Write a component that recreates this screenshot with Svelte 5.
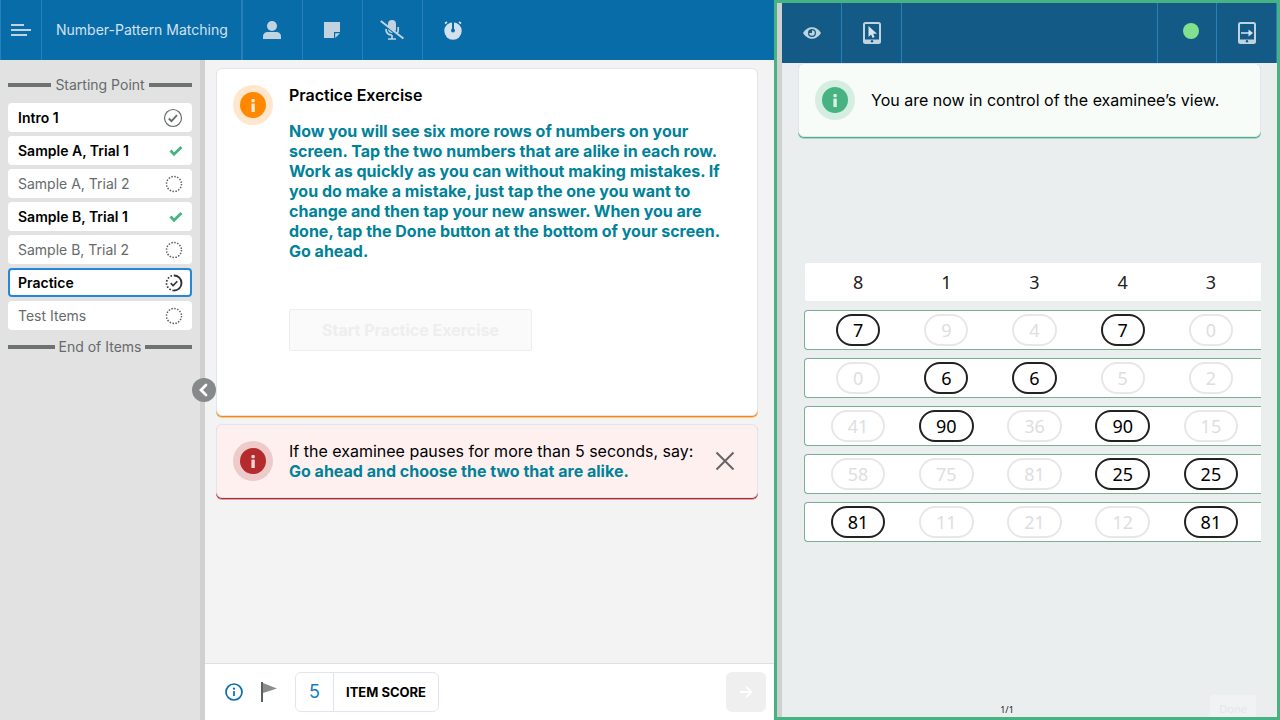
<script>
  const items = [
    { name: 'Intro 1', state: 'seen' },
    { name: 'Sample A, Trial 1', state: 'done' },
    { name: 'Sample A, Trial 2', state: 'open' },
    { name: 'Sample B, Trial 1', state: 'done' },
    { name: 'Sample B, Trial 2', state: 'open' },
    { name: 'Practice', state: 'current' },
    { name: 'Test Items', state: 'open' }
  ];
  const example = [8, 1, 3, 4, 3];
  let rows = $state([
    { values: [7, 9, 4, 7, 0], picked: [0, 3] },
    { values: [0, 6, 6, 5, 2], picked: [1, 2] },
    { values: [41, 90, 36, 90, 15], picked: [1, 3] },
    { values: [58, 75, 81, 25, 25], picked: [3, 4] },
    { values: [81, 11, 21, 12, 81], picked: [0, 4] }
  ]);
  let reminder = $state(true);

  function toggle(row, i) {
    row.picked = row.picked.includes(i) ? row.picked.filter((p) => p !== i) : [...row.picked, i];
  }
</script>

{#snippet badge(tone)}
  <span class="badge {tone}">
    <svg width="26" height="26" viewBox="0 0 26 26" aria-hidden="true">
      <circle cx="13" cy="13" r="13" />
      <rect class="mark" x="11.4" y="7" width="3.4" height="3.2" rx="1" />
      <path class="mark" d="M11.4 11.6h3.4V20h-3.4z" />
    </svg>
  </span>
{/snippet}

<div class="app">
  <section class="examiner">
    <header class="bar">
      <button class="menu" aria-label="Menu">
        <svg width="20" height="12" viewBox="0 0 20 12"><path d="M0 1h13M0 6h20M0 11h16" stroke="currentColor" stroke-width="2" /></svg>
      </button>
      <h1>Number-Pattern Matching</h1>
      <button class="tool" aria-label="Examinee">
        <svg width="18" height="18" viewBox="0 0 18 18" fill="currentColor"><circle cx="9" cy="5" r="5" /><path d="M0 18v-2.500C0 12.500 2 11 4.500 11h9c2.500 0 4.500 1.500 4.500 4.500V18z" /></svg>
      </button>
      <button class="tool" aria-label="Notes">
        <svg width="16" height="16" viewBox="0 0 16 16" fill="currentColor"><path d="M0 0h16v10h-6v6H0z" /><path d="M11.200 11.200H16L11.200 16z" /></svg>
      </button>
      <button class="tool" aria-label="Microphone off">
        <svg width="24" height="20" viewBox="0 0 24 20"><path d="M8 4a4 4 0 0 1 8 0v5a4 4 0 0 1-1 2.700L8 6.500zM8 9l5 4c-3 .3-5-1.500-5-4z" fill="currentColor" /><path d="M6 9c0 4 2.500 6 6 6M18.200 7v3c0 1.300-.4 2.400-1 3.200M12 15v4M8 19h8" fill="none" stroke="currentColor" stroke-width="1.700" /><path d="M.8 1l22.600 17.500" stroke="currentColor" stroke-width="2" /></svg>
      </button>
      <button class="tool last" aria-label="Timer">
        <svg width="18" height="20" viewBox="0 0 18 20"><circle cx="9" cy="11" r="8.700" fill="#d3e1ed" /><path d="M1 3.500l2-1.500M17 3.500l-2-1.500" stroke="#d3e1ed" stroke-width="1.600" /><path d="M9 1v9" stroke="#086ca9" stroke-width="2" /><circle cx="9" cy="10.500" r="2" fill="#086ca9" /></svg>
      </button>
    </header>

    <div class="body">
      <nav>
        <div class="marker">Starting Point</div>
        <ul>
          {#each items as item}
            <li>
              <button class="item {item.state}">
                <span>{item.name}</span>
                {#if item.state === 'seen'}
                  <svg width="20" height="20" viewBox="0 0 20 20" fill="none" stroke="#666b6b"><circle cx="10" cy="10" r="8.500" stroke-width="1.200" /><path d="M5.800 10.500l2.700 2.700 5.500-6" stroke-width="1.800" /></svg>
                {:else if item.state === 'done'}
                  <svg width="14" height="12" viewBox="0 0 14 12" fill="none" stroke="#47b382" stroke-width="2.800"><path d="M1.500 5.500l3.500 3.700L12.500 2" /></svg>
                {:else if item.state === 'open'}
                  <svg width="18" height="18" viewBox="0 0 18 18"><circle cx="9" cy="9" r="7.500" fill="none" stroke="#5c6060" stroke-width="1.500" stroke-dasharray="1.500 1.445" /></svg>
                {:else}
                  <svg width="18" height="18" viewBox="0 0 18 18" fill="none" stroke="#333"><path d="M9 1.500a7.500 7.500 0 0 1 0 15" stroke-width="1.900" /><path d="M9 16.500a7.500 7.500 0 0 1 0-15" stroke-width="1.700" stroke-dasharray="1.600 1.700" /><path d="M5.700 9.200l2.400 2.300 4.200-4.300" stroke-width="1.600" /></svg>
                {/if}
              </button>
            </li>
          {/each}
        </ul>
        <div class="marker">End of Items</div>
      </nav>
      <div class="divider">
        <button class="collapse" aria-label="Collapse item list">
          <svg width="10" height="14" viewBox="0 0 10 14"><path d="M7 2L2 7l5 5" fill="none" stroke="#fff" stroke-width="2.800" stroke-linecap="round" /></svg>
        </button>
      </div>

      <main>
        <div class="content">
          <article class="card orange exercise">
            {@render badge('orange')}
            <div class="text">
              <h2>Practice Exercise</h2>
              <p class="say">Now you will see six more rows of numbers on your screen. Tap the two numbers that are alike in each row. Work as quickly as you can without making mistakes. If you do make a mistake, just tap the one you want to change and then tap your new answer. When you are done, tap the Done button at the bottom of your screen. Go ahead.</p>
              <button class="start" disabled>Start Practice Exercise</button>
            </div>
          </article>
          {#if reminder}
            <article class="card red reminder">
              {@render badge('red')}
              <div class="text">
                <p>If the examinee pauses for more than 5 seconds, say:</p>
                <p class="say">Go ahead and choose the two that are alike.</p>
              </div>
              <button class="close" aria-label="Close" onclick={() => (reminder = false)}>
                <svg width="20" height="20" viewBox="0 0 20 20"><path d="M1.500 1.500l17 17M18.500 1.500l-17 17" stroke="#626666" stroke-width="2" /></svg>
              </button>
            </article>
          {/if}
        </div>
        <footer>
          <button class="plain" aria-label="Item information">
            <svg width="18" height="18" viewBox="0 0 18 18"><circle cx="9" cy="9" r="8" fill="none" stroke="#0b6dab" stroke-width="1.700" /><path d="M9 8v5" stroke="#0b6dab" stroke-width="1.700" /><circle cx="9" cy="5.700" r="1.100" fill="#0b6dab" /></svg>
          </button>
          <button class="plain" aria-label="Flag item">
            <svg width="16" height="20" viewBox="0 0 16 20"><path d="M2 1l14 5.500L2 11z" fill="#8a8d8d" /><path d="M1 0v20" stroke="#5c6060" stroke-width="2" /></svg>
          </button>
          <div class="score"><output>5</output><strong>ITEM SCORE</strong></div>
          <button class="next" aria-label="Next" disabled>
            <svg width="14" height="14" viewBox="0 0 14 14"><path d="M1 7h11M7 1.500L12.300 7 7 12.500" fill="none" stroke="#fff" stroke-width="1.800" /></svg>
          </button>
        </footer>
      </main>
    </div>
  </section>

  <section class="mirror">
    <div class="divider"></div>
    <div class="screen">
      <header class="bar dark">
        <button class="tool" aria-label="View">
          <svg width="18" height="12" viewBox="0 0 18 12"><path d="M0 6C4.500-1.700 13.500-1.700 18 6c-4.500 7.700-13.500 7.700-18 0z" fill="#c2d3e0" /><circle cx="9" cy="6" r="4" fill="#135b86" /><path d="M9 3.200A2.800 2.800 0 1 1 6.200 6H9z" fill="#c2d3e0" /></svg>
        </button>
        <button class="tool" aria-label="Control screen">
          <svg width="18" height="22" viewBox="0 0 18 22"><path d="M2.500 1h13A1.500 1.500 0 0 1 17 2.500v17a1.500 1.500 0 0 1-1.500 1.500h-13A1.500 1.500 0 0 1 1 19.500v-17A1.500 1.500 0 0 1 2.500 1z" fill="none" stroke="#c2d3e0" stroke-width="2" /><path d="M1 17.500h16V20H1z" fill="#c2d3e0" /><circle cx="9" cy="19.300" r="1.200" fill="#135b86" /><path d="M5.500 4v11l2.600-2.400 1.500 3.400 2-1-1.500-3.200H14z" fill="#d9e5ee" /></svg>
        </button>
        <span class="fill"></span>
        <button class="tool status" aria-label="Connected"><span class="dot"></span></button>
        <button class="tool send" aria-label="Send to examinee">
          <svg width="18" height="22" viewBox="0 0 18 22"><path d="M2.500 1h13A1.500 1.500 0 0 1 17 2.500v17a1.500 1.500 0 0 1-1.500 1.500h-13A1.500 1.500 0 0 1 1 19.500v-17A1.500 1.500 0 0 1 2.500 1z" fill="none" stroke="#c2d3e0" stroke-width="2" /><path d="M1 17.500h16V20H1z" fill="#c2d3e0" /><circle cx="9" cy="19.300" r="1.200" fill="#135b86" /><path d="M3 11h9" stroke="#d9e5ee" stroke-width="1.500" /><path d="M10.500 7.500L15 11l-4.500 3.500z" fill="#d9e5ee" /></svg>
        </button>
      </header>
      <div class="card green notice">
        {@render badge('green')}
        <p>You are now in control of the examinee’s view.</p>
      </div>
      <div class="grid">
        <div class="row example">
          {#each example as value}<span>{value}</span>{/each}
        </div>
        {#each rows as row}
          <div class="row">
            {#each row.values as value, i}
              <button class="pill" class:picked={row.picked.includes(i)} aria-pressed={row.picked.includes(i)} onclick={() => toggle(row, i)}>{value}</button>
            {/each}
          </div>
        {/each}
      </div>
      <div class="pager">
        <span class="count">1/1</span>
        <button class="finish" disabled>Done</button>
      </div>
    </div>
  </section>
</div>

<style>
  :global(body) { margin: 0; }
  * { box-sizing: border-box; }
  button { font: inherit; color: inherit; border: 0; padding: 0; background: none; }
  svg { display: block; flex: none; }
  h1, h2, p, ul { margin: 0; padding: 0; }

  .app { display: grid; grid-template-columns: 774fr 506fr; height: 100vh; overflow: hidden; font-family: Inter, 'Liberation Sans', sans-serif; font-size: 16px; line-height: 20px; color: #000; }
  .examiner { display: flex; flex-direction: column; min-width: 0; min-height: 0; }
  .bar { display: flex; flex: none; height: 60px; background: #086ca9; color: #c2d3e0; }
  .bar button { display: grid; place-items: center; }
  .menu { width: 42px; border-left: 1px solid #2980b9; border-right: 1px solid #2980b9; }
  h1 { display: flex; align-items: center; padding: 0 13px 0 14px; font-size: 14px; font-weight: 400; color: #d3e1ed; white-space: nowrap; border-right: 2px solid #2980b9; }
  .tool { width: 60px; border-right: 1px solid #2980b9; }
  .tool.last { border-right: 0; }

  .body { display: flex; flex: 1; min-height: 0; }
  nav { width: 200px; flex: none; padding: 15px 8px; background: #e2e2e2; }
  .marker { display: flex; align-items: center; gap: 4px; font-size: 14px; color: #666b6b; white-space: nowrap; }
  .marker::before, .marker::after { content: ''; flex: 1; height: 4px; background: #6d7272; }
  ul { display: flex; flex-direction: column; gap: 4px; margin: 8px 0 7px; list-style: none; }
  li { display: flex; }
  .item { display: flex; flex: 1; align-items: center; justify-content: space-between; height: 29px; padding: 0 7px 0 8px; border: 2px solid #fff; border-radius: 4px; background: #fff; font-size: 14px; font-weight: 600; }
  .item.open { font-weight: 400; color: #666b6b; }
  .item.current { border-color: #2487d8; }
  .divider { width: 5px; flex: none; background: #d0d0d0; position: relative; }
  .collapse { position: absolute; z-index: 1; top: 318px; left: -8px; width: 24px; height: 24px; display: grid; place-items: center; border-radius: 50%; background: #868a8a; }

  main { display: flex; flex: 1; flex-direction: column; min-width: 0; background: #f3f3f3; }
  .content { display: flex; flex: 1; flex-direction: column; gap: 8px; padding: 8px 16px 8px 11px; }
  .card { display: flex; gap: 16px; padding: 16px; border: 1px solid #e1e5f0; border-radius: 6px; background: #fff; }
  .card.orange { box-shadow: 0 1px 0 #f8880a, 0 2px 0 #f8880a66; }
  .card.red { box-shadow: 0 1px 0 #b32b31, 0 2px 0 #b32b3166; background: #fff0f0; }
  .card.green { box-shadow: 0 1px 0 #47b382, 0 2px 0 #47b38266; background: #f7fcf9; }
  .badge { display: grid; place-items: center; flex: none; width: 40px; height: 40px; border-radius: 50%; }
  .badge.orange { background: #ffe6cc; fill: #ff8800; }
  .badge.red { background: #efcaca; fill: #b32b2d; }
  .badge.green { background: #d6eee1; fill: #47b382; }
  .mark { fill: #fff; opacity: 0.8; }
  .text { flex: 1; min-width: 0; }
  .exercise { min-height: 348px; }
  h2 { margin-bottom: 16px; font-size: 16px; line-height: 20px; font-weight: 600; }
  .say { color: #008299; font-weight: 700; }
  .start { height: 42px; margin-top: 48px; padding: 0 32px; border: 1px solid #ededed; border-radius: 2px; background: #fafafa; color: #eee; font-weight: 700; }
  .reminder { align-items: center; gap: 8px; }
  .reminder .text { padding-left: 8px; }
  .close { display: grid; place-items: center; width: 32px; height: 32px; flex: none; }

  footer { display: flex; align-items: center; gap: 17px; height: 57px; padding: 0 8px 0 20px; border-top: 1px solid #dfdfdf; background: #fff; }
  .plain { display: grid; place-items: center; width: 18px; height: 24px; }
  .score { display: flex; height: 40px; border: 1px solid #e1e5f2; border-radius: 6px; }
  .score output { display: grid; place-items: center; width: 38px; border-right: 1px solid #e1e5f2; font-size: 18px; color: #167bc0; }
  .score strong { display: flex; align-items: center; padding: 0 12px; font-size: 13px; font-weight: 700; }
  .next { display: grid; place-items: center; width: 40px; height: 40px; margin-left: auto; border-radius: 6px; background: #efefef; }

  .mirror { display: flex; min-width: 0; min-height: 0; border: 3px solid #47b382; background: #eaeeef; }
  .screen { display: flex; flex: 1; flex-direction: column; min-width: 0; }
  .bar.dark { background: #135b86; }
  .tool.status { padding: 0 0 4px 8px; border-left: 1px solid #2980b9; }
  .fill { flex: 1; }
  .dot { width: 16px; height: 16px; border-radius: 50%; background: #83e08e; }
  .notice { align-items: center; margin: 0 16px; }
  .grid { display: flex; flex-direction: column; gap: 8px; margin: 125px 16px 0 22px; font-family: 'Noto Sans', sans-serif; font-size: 18px; }
  .row { display: grid; grid-template-columns: repeat(5, 1fr); place-items: center; height: 40px; padding: 0 6px 0 9px; border: 1px solid #78b190; border-right: 0; border-radius: 4px 0 0 4px; background: #fff; }
  .example { border-color: transparent; background-clip: padding-box; color: #222; }
  .pill { height: 32px; padding: 0 15px; border: 2px solid #e7e7e7; border-radius: 16px; background: #fff; color: #dedede; }
  .pill.picked { border-color: #222; color: #000; }
  .pager { display: grid; grid-template-columns: 1fr auto 1fr; align-items: start; height: 22px; margin-top: auto; padding: 0 21px 0 0; overflow: hidden; font-family: 'Noto Sans', sans-serif; }
  .count { grid-column: 2; margin-right: 24px; padding-top: 5px; font-size: 9px; color: #222; }
  .finish { justify-self: end; height: 28px; padding: 0 9px; border-radius: 3px; background: #f0f2f4; color: #e5e7e9; font-size: 11px; }
</style>
